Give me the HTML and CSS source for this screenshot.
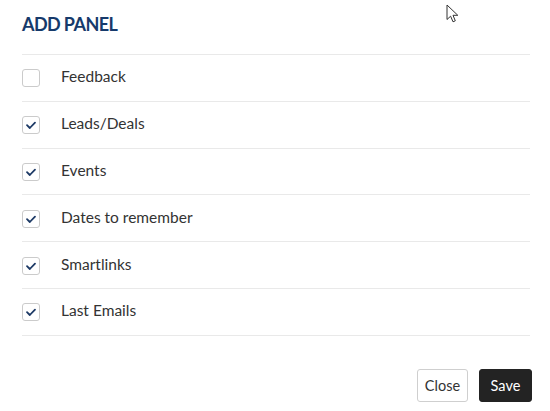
FILE: index.html
```html
<!DOCTYPE html>
<html>
<head>
<meta charset="utf-8">
<link rel="stylesheet" href="styles.css">
</head>
<body>
<div class="modal">
  <h2 class="title">ADD PANEL</h2>
  <ul class="list">
    <li class="row"><span class="box"></span><span class="label">Feedback</span></li>
    <li class="row"><span class="box checked"><svg viewBox="0 0 18 18" width="18" height="18"><path d="M5 9.2 L7.8 12 L13 6.6" fill="none" stroke="#1d3a66" stroke-width="1.8" stroke-linecap="round" stroke-linejoin="round"/></svg></span><span class="label">Leads/Deals</span></li>
    <li class="row"><span class="box checked"><svg viewBox="0 0 18 18" width="18" height="18"><path d="M5 9.2 L7.8 12 L13 6.6" fill="none" stroke="#1d3a66" stroke-width="1.8" stroke-linecap="round" stroke-linejoin="round"/></svg></span><span class="label">Events</span></li>
    <li class="row"><span class="box checked"><svg viewBox="0 0 18 18" width="18" height="18"><path d="M5 9.2 L7.8 12 L13 6.6" fill="none" stroke="#1d3a66" stroke-width="1.8" stroke-linecap="round" stroke-linejoin="round"/></svg></span><span class="label">Dates to remember</span></li>
    <li class="row"><span class="box checked"><svg viewBox="0 0 18 18" width="18" height="18"><path d="M5 9.2 L7.8 12 L13 6.6" fill="none" stroke="#1d3a66" stroke-width="1.8" stroke-linecap="round" stroke-linejoin="round"/></svg></span><span class="label">Smartlinks</span></li>
    <li class="row"><span class="box checked"><svg viewBox="0 0 18 18" width="18" height="18"><path d="M5 9.2 L7.8 12 L13 6.6" fill="none" stroke="#1d3a66" stroke-width="1.8" stroke-linecap="round" stroke-linejoin="round"/></svg></span><span class="label">Last Emails</span></li>
  </ul>
  <div class="actions">
    <button class="btn btn-close">Close</button>
    <button class="btn btn-save">Save</button>
  </div>
  <svg class="cursor" viewBox="0 0 13 20" width="13" height="20"><path d="M1 1 L1 15.5 L4.6 12.2 L7 17.8 L9.3 16.8 L7 11.3 L11.8 11.3 Z" fill="#fff" stroke="#333" stroke-width="1" stroke-linejoin="miter"/></svg>
</div>
</body>
</html>
```

FILE: styles.css
```css
* { box-sizing: border-box; }
html, body {
  margin: 0;
  padding: 0;
  background: #fff;
}
body {
  font-family: Lato, "Open Sans", sans-serif;
  color: #333;
}
.modal {
  position: relative;
  width: 550px;
  height: 411px;
  padding: 13px 20px 0 22px;
}
.title {
  margin: 0;
  font-size: 18px;
  font-weight: 700;
  color: #163a6b;
  letter-spacing: -0.6px;
  line-height: 22px;
  height: 42px;
  border-bottom: 1px solid #e9e9e9;
}
.list {
  list-style: none;
  margin: 0;
  padding: 0;
}
.row {
  display: flex;
  align-items: center;
  height: 46.8px;
  border-bottom: 1px solid #e9e9e9;
}
.box {
  width: 18px;
  height: 18px;
  border: 1px solid #cbcbcb;
  border-radius: 3px;
  background: #fff;
  display: flex;
  align-items: center;
  justify-content: center;
  flex: none;
  margin-top: 1px;
}
.box svg { display: block; flex: none; }
.label {
  margin-left: 21px;
  font-size: 15.5px;
  color: #333;
  margin-top: -3px;
}
.actions {
  display: flex;
  justify-content: flex-end;
  gap: 11px;
  margin-top: 33px;
}
.btn {
  font-family: Lato, "Open Sans", sans-serif;
  font-size: 14.5px;
  height: 33px;
  border-radius: 3px;
  padding: 0;
  cursor: pointer;
}
.btn-close {
  background: #fff;
  border: 1px solid #cfcfcf;
  color: #333;
  width: 51px;
}
.btn-save {
  background: #232323;
  border: 1px solid #232323;
  color: #fff;
  width: 53px;
  margin-right: -2px;
}
.cursor {
  position: absolute;
  left: 446px;
  top: 4px;
}
```
